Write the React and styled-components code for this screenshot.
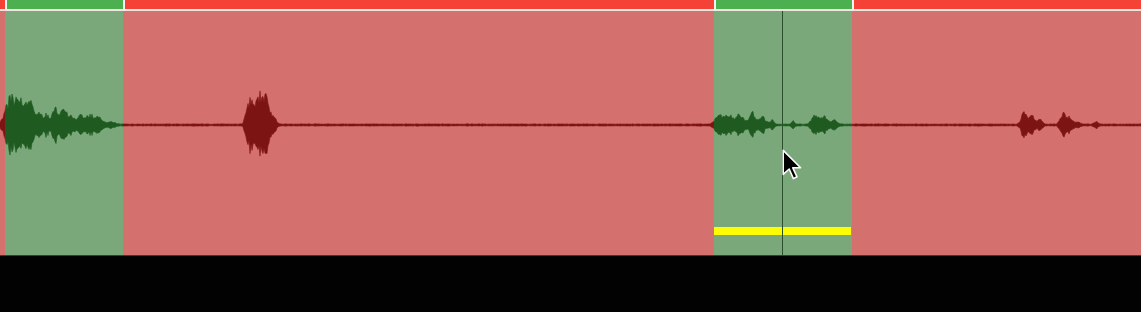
import React from "react";
import styled, { createGlobalStyle } from "styled-components";

const GlobalStyle = createGlobalStyle`
  html, body {
    margin: 0;
    padding: 0;
    background: #000;
    font-family: "Liberation Sans", Arial, sans-serif;
    overflow: hidden;
  }
`;

const LANE_H = 244;
const MID = 114;

// segments of the timeline: kind + pixel range
const segments = [
  { kind: "bad", x: 0, w: 5 },
  { kind: "good", x: 5, w: 118 },
  { kind: "bad", x: 123, w: 591 },
  { kind: "good", x: 714, w: 138, selected: true },
  { kind: "bad", x: 852, w: 289 },
];

// bumps of speech: center, half width, amplitude
const bumps = [
  [10, 7, 29], [20, 7, 28], [30, 6, 24], [40, 4, 15], [47, 3, 12], [55, 4, 21],
  [64, 5, 22], [72, 3, 10], [80, 5, 11], [90, 6, 11], [99, 5, 8], [110, 6, 3],
  [250, 5, 30], [259, 5, 36], [266, 4, 30], [273, 4, 12],
  [718, 5, 10], [728, 7, 11], [740, 6, 12], [752, 4, 16], [762, 5, 10], [772, 3, 5],
  [793, 2, 4], [815, 5, 10], [824, 5, 9], [834, 4, 5],
  [1024, 4, 14], [1032, 4, 10], [1040, 3, 8], [1063, 4, 12], [1070, 4, 8],
  [1078, 3, 3], [1096, 3, 3],
];

const rand = (n) => {
  const s = Math.sin(n * 12.9898 + 78.233) * 43758.5453;
  return s - Math.floor(s);
};

const buildWave = () => {
  const top = [];
  const bot = [];
  for (let x = 0; x <= 1141; x++) {
    let a = 0.7 + rand(x) * 0.5;
    bumps.forEach(([c, hw, amp]) => {
      const d = (x - c) / hw;
      if (Math.abs(d) < 1.6) a += amp * Math.exp(-d * d * 1.2) * (0.55 + 0.45 * rand(x * 3.1 + c));
    });
    top.push(`${x},${(MID - a).toFixed(1)}`);
    bot.push(`${x},${(MID + a * (0.85 + 0.2 * rand(x * 7.7))).toFixed(1)}`);
  }
  return `M${top.join(" L")} L${bot.reverse().join(" L")} Z`;
};

const wavePath = buildWave();

const Track = styled.div`
  width: 1141px;
  display: flex;
  flex-direction: column;
`;

const Lanes = styled.div`
  position: relative;
  display: flex;
`;

const Segment = styled.div`
  position: relative;
  width: ${(p) => p.$w}px;
  display: flex;
  flex-direction: column;
  flex-shrink: 0;
`;

const Strip = styled.div`
  height: 9px;
  background: ${(p) => (p.$kind === "good" ? "#4caf50" : "#f44336")};
  border-left: ${(p) => (p.$first ? "0" : "2px solid #f3f3ef")};
  border-bottom: 2px solid #f0e8e0;
`;

const Body = styled.div`
  height: ${LANE_H}px;
  background: ${(p) => (p.$kind === "good" ? "#7ba87b" : "#d4706e")};
`;

const Wave = styled.svg`
  display: block;
  width: 100%;
  height: 100%;
  path {
    fill: ${(p) => (p.$kind === "good" ? "#1f5a20" : "#7d1414")};
    stroke: ${(p) => (p.$kind === "good" ? "#1f5a20" : "#7d1414")};
    stroke-width: 0.6;
  }
`;

const SelectBar = styled.div`
  position: absolute;
  left: 0;
  right: 1px;
  bottom: 20px;
  height: 8px;
  background: #fcfc05;
`;

const Playhead = styled.div`
  position: absolute;
  left: 782px;
  top: 11px;
  bottom: 0;
  width: 1px;
  background: #2a4f2a;
`;

const Cursor = styled.svg`
  position: absolute;
  left: 782px;
  top: 149px;
  width: 24px;
  height: 34px;
`;

const Floor = styled.div`
  height: 57px;
  background: #020202;
  border-top: 1px solid #3a3a3a;
`;

const App = () => (
  <>
    <GlobalStyle />
    <Track>
      <Lanes>
        {segments.map((s, i) => (
          <Segment key={i} $w={s.w}>
            <Strip $kind={s.kind} $first={i === 0} />
            <Body $kind={s.kind}>
              <Wave
                $kind={s.kind}
                viewBox={`${s.x} 0 ${s.w} ${LANE_H}`}
                preserveAspectRatio="none"
              >
                <path d={wavePath} />
              </Wave>
            </Body>
            {s.selected && <SelectBar />}
          </Segment>
        ))}
        <Playhead />
        <Cursor viewBox="0 0 20 28">
          <path
            d="M1 1 L1 21 L6 16.5 L9.5 24.5 L12.5 23 L9 15.5 L15.5 15.5 Z"
            fill="#000"
            stroke="#fff"
            strokeWidth="1.3"
            strokeLinejoin="round"
          />
        </Cursor>
      </Lanes>
      <Floor />
    </Track>
  </>
);

export default App;
